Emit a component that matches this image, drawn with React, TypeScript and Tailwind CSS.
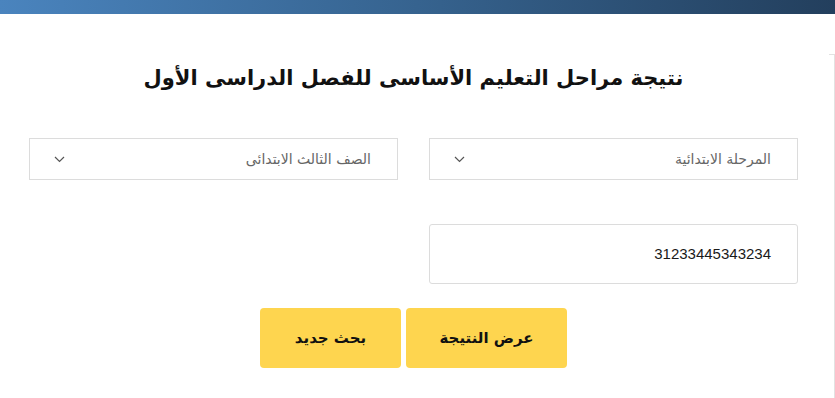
import React from "react";

const Chevron = () => (
	<svg width="11" height="7" viewBox="0 0 11 7" fill="none" className="text-[#555]">
		<path d="M1 1l4.5 4.5L10 1" stroke="currentColor" strokeWidth="1.2" />
	</svg>
);

const SelectBox = ({ label }: { label: string }) => (
	<div className="h-[42px] border border-[#dcdcdc] bg-white flex items-center justify-between pr-[26px] pl-[24px]">
		<span className="text-[14px] text-[#666]">{label}</span>
		<Chevron />
	</div>
);

export default function App() {
	return (
		<div
			dir="rtl"
			className="w-[835px] h-[398px] overflow-hidden bg-white"
			style={{ fontFamily: '"DejaVu Sans", "Noto Sans", sans-serif' }}
		>
			<div className="h-[14px] bg-gradient-to-l from-[#233f5d] via-[#36638f] to-[#4a84be]" />
			<div className="flex">
				<div className="mt-[40px] h-[400px] w-[6px] border-r border-t border-[#e2e2e2] shrink-0" />
				<main className="w-[829px] shrink-0 pr-[31px] pl-[29px]">
					<h1 className="mt-[48px] text-center text-[21px] font-bold text-[#111] leading-[32px]">
						نتيجة مراحل التعليم الأساسى للفصل الدراسى الأول
					</h1>
					<div className="mt-[44px] grid grid-cols-2 gap-x-[31px]">
						<SelectBox label="المرحلة الابتدائية" />
						<SelectBox label="الصف الثالث الابتدائى" />
					</div>
					<div className="mt-[44px] grid grid-cols-2 gap-x-[31px]">
						<div className="h-[60px] rounded-[3px] border border-[#dcdcdc] flex items-center pr-[26px]">
							<span
								dir="ltr"
								className="text-[15px] text-[#1a1a1a]"
								style={{ fontFamily: '"Liberation Sans", sans-serif' }}
							>
								31233445343234
							</span>
						</div>
						<div />
					</div>
					<div className="mt-[24px] flex justify-center gap-[5px]">
						<button className="w-[161px] h-[60px] rounded-[4px] bg-[#fed54f] text-[15px] font-bold text-[#111]">
							عرض النتيجة
						</button>
						<button className="w-[141px] h-[60px] rounded-[4px] bg-[#fed54f] text-[15px] font-bold text-[#111]">
							بحث جديد
						</button>
					</div>
				</main>
			</div>
		</div>
	);
}
